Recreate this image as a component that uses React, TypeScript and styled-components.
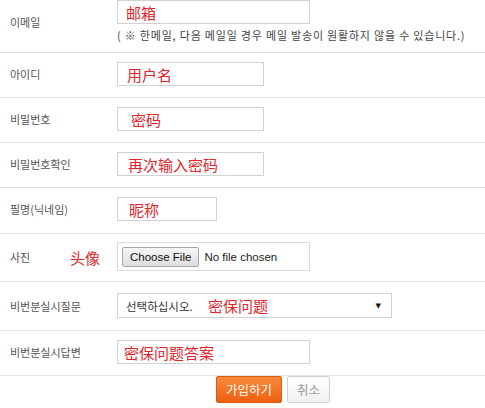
import React from "react";
import styled, { createGlobalStyle } from "styled-components";

const Global = createGlobalStyle`
  html, body { margin: 0; padding: 0; background: #fff; }
  body { font-family: "Noto Sans CJK KR", "Noto Sans", sans-serif; }
  * { box-sizing: border-box; }
`;

const Form = styled.div`
  width: 485px;
  display: flex;
  flex-direction: column;
`;

const Row = styled.div<{ $pt: number; $pb: number }>`
  display: flex;
  align-items: flex-start;
  padding: ${(p) => p.$pt}px 0 ${(p) => p.$pb}px 0;
  border-bottom: 1px solid #e2e2e2;
`;

const Label = styled.div<{ $h: number }>`
  width: 117px;
  flex: none;
  height: ${(p) => p.$h}px;
  padding-left: 10px;
  display: flex;
  align-items: center;
  font-family: "Noto Sans CJK KR", sans-serif;
  font-size: 11px;
  color: #555;
  position: relative;
`;

const Field = styled.div`
  display: flex;
  flex-direction: column;
`;

const Input = styled.div<{ $w: number; $indent: number }>`
  width: ${(p) => p.$w}px;
  height: 24px;
  border: 1px solid #d2d2d2;
  background: #fff;
  display: flex;
  align-items: center;
  padding-left: ${(p) => p.$indent}px;
`;

const Red = styled.span`
  font-family: "Noto Sans CJK SC", sans-serif;
  font-size: 15px;
  color: #e3242b;
  line-height: 1;
`;

const Note = styled(Red)`
  position: absolute;
  left: 70px;
  top: 50%;
  transform: translateY(-50%);
`;

const Help = styled.div`
  margin-top: 4px;
  font-family: "Noto Sans CJK KR", sans-serif;
  font-size: 11px;
  line-height: 14px;
  height: 14px;
  color: #444;
  white-space: nowrap;
  letter-spacing: 0.8px;
`;

const FileBox = styled.div`
  width: 193px;
  height: 29px;
  border: 1px solid #dcdcdc;
  display: flex;
  align-items: center;
  padding-left: 4px;
  gap: 5px;
`;

const FileButton = styled.div`
  height: 20px;
  padding: 0 7px;
  border: 1px solid #a6a6a6;
  border-radius: 2px;
  background: linear-gradient(#f6f6f6, #dedede);
  font-family: "Liberation Sans", Arial, sans-serif;
  font-size: 11.5px;
  color: #111;
  display: flex;
  align-items: center;
`;

const FileText = styled.span`
  font-family: "Liberation Sans", Arial, sans-serif;
  font-size: 11.5px;
  color: #222;
`;

const SelectBox = styled.div`
  width: 275px;
  height: 25px;
  border: 1px solid #d2d2d2;
  display: flex;
  align-items: center;
  padding: 0 10px 0 8px;
`;

const SelectText = styled.span`
  font-family: "Noto Sans CJK KR", sans-serif;
  font-size: 11.5px;
  color: #333;
  width: 82px;
`;

const Arrow = styled.span`
  margin-left: auto;
  font-size: 7px;
  color: #111;
  font-family: "DejaVu Sans", sans-serif;
`;

const Buttons = styled.div`
  display: flex;
  gap: 5px;
  padding-left: 216px;
`;

const Btn = styled.div<{ $primary?: boolean }>`
  height: 27px;
  padding: 0 9px;
  display: flex;
  align-items: center;
  font-family: "Noto Sans CJK KR", sans-serif;
  font-size: 12.5px;
  border-radius: 2px;
  ${(p) =>
    p.$primary
      ? `background: linear-gradient(#fb8a3c, #ee6010);
         border: 1px solid #dc5a10;
         color: #fff;`
      : `background: linear-gradient(#ffffff, #f1f1f1);
         border: 1px solid #cfcfcf;
         color: #9a9a9a;`}
`;

export default function App() {
  return (
    <>
      <Global />
      <Form>
        <Row $pt={0} $pb={8}>
          <Label $h={44}>이메일</Label>
          <Field>
            <Input $w={193} $indent={8}>
              <Red>邮箱</Red>
            </Input>
            <Help>( ※ 한메일, 다음 메일일 경우 메일 발송이 원활하지 않을 수 있습니다.)</Help>
          </Field>
        </Row>
        <Row $pt={9} $pb={11}>
          <Label $h={24}>아이디</Label>
          <Input $w={147} $indent={9}>
            <Red>用户名</Red>
          </Input>
        </Row>
        <Row $pt={9} $pb={11}>
          <Label $h={24}>비밀번호</Label>
          <Input $w={147} $indent={13}>
            <Red>密码</Red>
          </Input>
        </Row>
        <Row $pt={9} $pb={11}>
          <Label $h={24}>비밀번호확인</Label>
          <Input $w={147} $indent={10}>
            <Red>再次输入密码</Red>
          </Input>
        </Row>
        <Row $pt={9} $pb={12}>
          <Label $h={24}>필명(닉네임)</Label>
          <Input $w={100} $indent={11}>
            <Red>昵称</Red>
          </Input>
        </Row>
        <Row $pt={8} $pb={10}>
          <Label $h={29}>
            사진
            <Note>头像</Note>
          </Label>
          <FileBox>
            <FileButton>Choose File</FileButton>
            <FileText>No file chosen</FileText>
          </FileBox>
        </Row>
        <Row $pt={11} $pb={12}>
          <Label $h={25}>비번분실시질문</Label>
          <SelectBox>
            <SelectText>선택하십시오.</SelectText>
            <Red>密保问题</Red>
            <Arrow>▼</Arrow>
          </SelectBox>
        </Row>
        <Row $pt={9} $pb={11}>
          <Label $h={24}>비번분실시답변</Label>
          <Input $w={193} $indent={6}>
            <Red>密保问题答案</Red>
          </Input>
        </Row>
        <Buttons>
          <Btn $primary>가입하기</Btn>
          <Btn>취소</Btn>
        </Buttons>
      </Form>
    </>
  );
}
